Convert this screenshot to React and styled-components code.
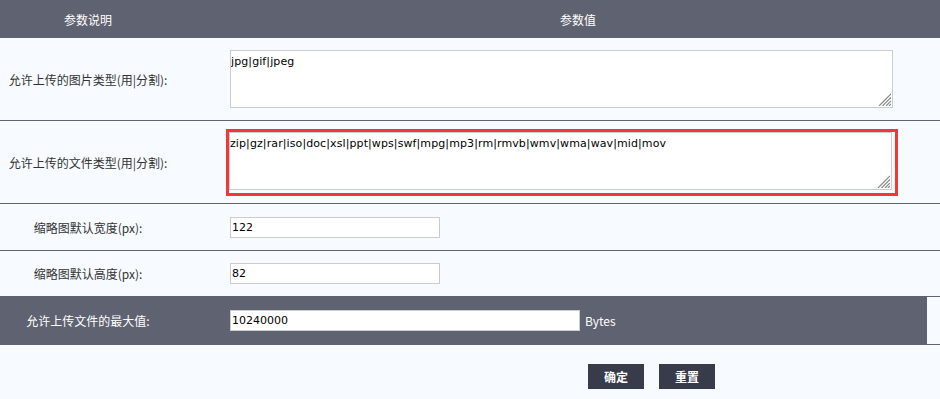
import React from 'react';
import styled, { createGlobalStyle } from 'styled-components';

const GlobalStyle = createGlobalStyle`
  body {
    margin: 0;
    background: #f7fbff;
    font-family: 'Noto Sans CJK SC', sans-serif;
    font-size: 12px;
    color: #333;
  }
`;

const Table = styled.div`
  width: 940px;
  background: #f7fbff;
`;

const HeadRow = styled.div`
  display: grid;
  grid-template-columns: 176px 1fr;
  height: 38px;
  align-items: center;
  background: #5f6270;
  color: #fff;
`;

const HeadCell = styled.div`
  text-align: center;
  padding-left: ${p => p.$indent || 0}px;
`;

const Row = styled.div`
  display: grid;
  grid-template-columns: 176px 1fr ${p => (p.$dark ? '14px' : '')};
  height: ${p => p.$h}px;
  align-items: center;
  border-bottom: 1px solid #5f6270;
  background: ${p => (p.$dark ? '#5f6270' : '#f7fbff')};
  color: ${p => (p.$dark ? '#fff' : '#333')};
`;

const Label = styled.div`
  text-align: center;
  white-space: nowrap;
`;

const ValueCell = styled.div`
  display: flex;
  align-items: center;
  padding-left: ${p => p.$pad ?? 54}px;
`;

const Filler = styled.div`
  align-self: stretch;
  background: #f7fbff;
  border-left: 1px solid #5f6270;
  border-top: 1px solid #5f6270;
  margin-top: -1px;
`;

const AreaBox = styled.div`
  position: relative;
  width: 663px;
  height: 58px;
`;

const Area = styled.textarea`
  display: block;
  box-sizing: border-box;
  width: 100%;
  height: 100%;
  margin: 0;
  padding: 3px 0 0 0;
  border: 1px solid #ccc;
  background: #fff;
  font-family: 'DejaVu Sans', sans-serif;
  font-size: 11px;
  letter-spacing: 0.1px;
  line-height: 15px;
  color: #000;
  resize: none;
`;

const Grip = styled.svg`
  position: absolute;
  right: 2px;
  bottom: 2px;
  pointer-events: none;
`;

const Highlight = styled.div`
  border: 3px solid #f33636;
  padding: 0 3px 3px 0;
  margin-left: -4px;
  margin-top: 1px;
`;

const Input = styled.input`
  box-sizing: border-box;
  width: ${p => p.$w}px;
  height: 21px;
  margin: 0;
  padding: 0 1px;
  border: 1px solid #ccc;
  background: #fff;
  font-family: 'DejaVu Sans', sans-serif;
  font-size: 11px;
  color: #000;
`;

const Unit = styled.span`
  margin-left: 5px;
  color: #fff;
`;

const Actions = styled.div`
  display: flex;
  gap: 15px;
  padding: 19px 0 0 588px;
`;

const Button = styled.button`
  width: 56px;
  height: 25px;
  border: none;
  background: #373b4a;
  color: #fff;
  font-family: 'Noto Sans CJK SC', sans-serif;
  font-size: 12px;
  font-weight: bold;
  cursor: pointer;
`;

function TextBox({ value }) {
  return (
    <AreaBox>
      <Area defaultValue={value} />
      <Grip width="14" height="14" viewBox="0 0 14 14">
        <g stroke="#8a8a8a" strokeWidth="1.2">
          <line x1="2" y1="14" x2="14" y2="2" />
          <line x1="5.5" y1="14" x2="14" y2="5.5" />
          <line x1="9" y1="14" x2="14" y2="9" />
          <line x1="12" y1="14" x2="14" y2="12" />
        </g>
      </Grip>
    </AreaBox>
  );
}

export default function App() {
  return (
    <>
      <GlobalStyle />
      <Table>
        <HeadRow>
          <HeadCell>参数说明</HeadCell>
          <HeadCell $indent={40}>参数值</HeadCell>
        </HeadRow>
        <Row $h={82}>
          <Label>允许上传的图片类型(用|分割):</Label>
          <ValueCell>
            <TextBox value="jpg|gif|jpeg" />
          </ValueCell>
        </Row>
        <Row $h={82}>
          <Label>允许上传的文件类型(用|分割):</Label>
          <ValueCell>
            <Highlight>
              <TextBox value="zip|gz|rar|iso|doc|xsl|ppt|wps|swf|mpg|mp3|rm|rmvb|wmv|wma|wav|mid|mov" />
            </Highlight>
          </ValueCell>
        </Row>
        <Row $h={46}>
          <Label>缩略图默认宽度(px):</Label>
          <ValueCell>
            <Input $w={210} defaultValue="122" />
          </ValueCell>
        </Row>
        <Row $h={45}>
          <Label>缩略图默认高度(px):</Label>
          <ValueCell>
            <Input $w={210} defaultValue="82" />
          </ValueCell>
        </Row>
        <Row $h={47} $dark>
          <Label>允许上传文件的最大值:</Label>
          <ValueCell>
            <Input $w={350} defaultValue="10240000" />
            <Unit>Bytes</Unit>
          </ValueCell>
          <Filler />
        </Row>
        <Actions>
          <Button>确定</Button>
          <Button>重置</Button>
        </Actions>
      </Table>
    </>
  );
}
